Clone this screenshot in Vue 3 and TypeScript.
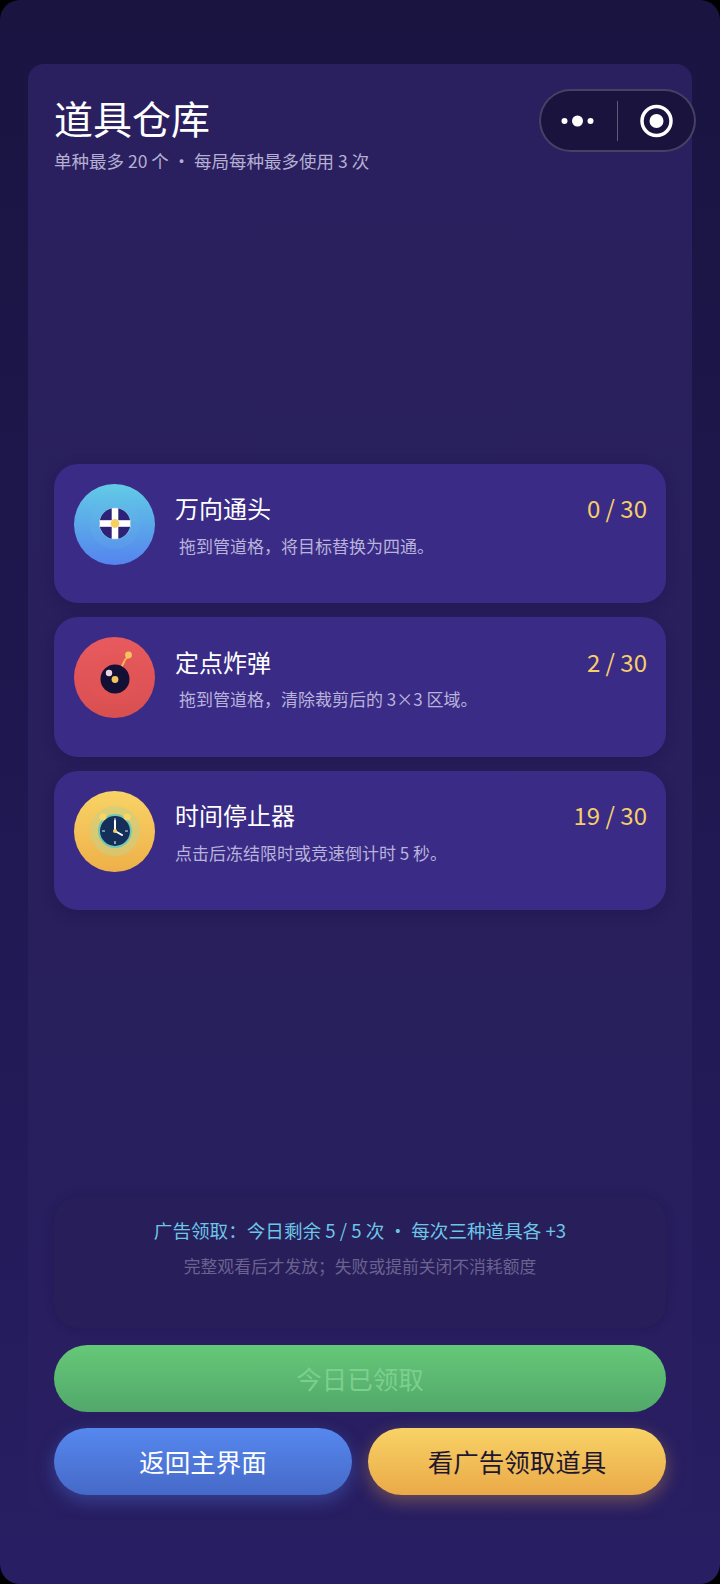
<script setup lang="ts">
interface Item { key: string; name: string; count: string; desc: string; indent: boolean }
const items: Item[] = [
  { key: 'pipe', name: '万向通头', count: '0 / 30', desc: '拖到管道格，将目标替换为四通。', indent: true },
  { key: 'bomb', name: '定点炸弹', count: '2 / 30', desc: '拖到管道格，清除裁剪后的 3×3 区域。', indent: true },
  { key: 'clock', name: '时间停止器', count: '19 / 30', desc: '点击后冻结限时或竞速倒计时 5 秒。', indent: false },
]
</script>

<template>
  <div class="screen">
    <div class="panel">
      <header class="head">
        <h1 class="title">道具仓库</h1>
        <p class="sub">单种最多 20 个 ・ 每局每种最多使用 3 次</p>
      </header>

      <main class="list">
        <section v-for="it in items" :key="it.key" class="card">
          <div class="icon" :class="'icon-' + it.key">
            <svg v-if="it.key === 'pipe'" viewBox="0 0 80 80" width="80" height="80">
              <circle cx="40" cy="40" r="25" fill="#6cc9e6" opacity=".12" />
              <circle cx="40" cy="39.5" r="16" fill="#7fd0ea" />
              <circle cx="40" cy="39.5" r="15.4" fill="#2f2176" />
              <rect x="24.6" y="36.2" width="30.8" height="6.6" fill="#fff" />
              <rect x="36.7" y="24.1" width="6.6" height="30.8" fill="#fff" />
              <circle cx="40" cy="39.5" r="4.4" fill="#f6cf63" />
            </svg>
            <svg v-else-if="it.key === 'bomb'" viewBox="0 0 80 80" width="80" height="80">
              <circle cx="40" cy="41" r="25" fill="#e35656" opacity=".3" />
              <path d="M46 30 L49 24 Q50 21 53 19" fill="none" stroke="#f4b45a" stroke-width="2" stroke-linecap="round" />
              <circle cx="53.5" cy="17" r="3.4" fill="#f6c45e" />
              <circle cx="40" cy="41" r="14.5" fill="#141035" />
              <circle cx="34" cy="35" r="3.2" fill="#ecd3e0" />
              <circle cx="40" cy="41.5" r="3.4" fill="#f3c45c" />
            </svg>
            <svg v-else viewBox="0 0 80 80" width="80" height="80">
              <circle cx="40" cy="40" r="25" fill="#c6cf86" opacity=".55" />
              <circle cx="40" cy="40" r="17" fill="#6fc9b8" />
              <circle cx="28" cy="26" r="3.6" fill="#f6d766" />
              <circle cx="52" cy="26" r="3.6" fill="#f6d766" />
              <circle cx="40" cy="40" r="15" fill="#14305a" />
              <path d="M40 27.5v2M40 50.5v2M27.5 40h2M50.5 40h2" stroke="#e8f0ee" stroke-width="1.2" stroke-linecap="round" />
              <path d="M40 40V30M40 40l7 4" fill="none" stroke="#fff" stroke-width="2" stroke-linecap="round" />
              <circle cx="40" cy="40" r="2" fill="#f6cf63" />
            </svg>
          </div>
          <div class="body">
            <div class="row">
              <span class="name">{{ it.name }}</span>
              <span class="count">{{ it.count }}</span>
            </div>
            <p class="desc" :class="{ indent: it.indent }">{{ it.desc }}</p>
          </div>
        </section>
      </main>

      <section class="ad">
        <p class="ad-main">广告领取：今日剩余 5 / 5 次 ・ 每次三种道具各 +3</p>
        <p class="ad-note">完整观看后才发放；失败或提前关闭不消耗额度</p>
      </section>

      <button class="btn btn-green" type="button">今日已领取</button>
      <div class="btn-row">
        <button class="btn btn-blue" type="button">返回主界面</button>
        <button class="btn btn-yellow" type="button">看广告领取道具</button>
      </div>
    </div>

    <div class="capsule">
      <svg viewBox="0 0 157 63" width="157" height="63">
        <circle cx="25.5" cy="32" r="3" fill="#fff" />
        <circle cx="38.5" cy="32" r="5.5" fill="#fff" />
        <circle cx="51.5" cy="32" r="3" fill="#fff" />
        <rect x="78" y="12" width="1" height="40" fill="#ffffff" opacity=".3" />
        <circle cx="117.5" cy="32" r="14.5" fill="none" stroke="#fff" stroke-width="3.5" />
        <circle cx="117.5" cy="32" r="7" fill="#fff" />
      </svg>
    </div>
  </div>
</template>

<style>
html, body { margin: 0; background: #000; }
</style>

<style scoped>
.screen {
  position: relative;
  box-sizing: border-box;
  width: 720px;
  height: 1584px;
  padding: 64px 28px 72px;
  border-radius: 20px;
  background: linear-gradient(180deg, #1a1441 0%, #1f1851 50%, #281e63 100%);
  font-family: "Noto Sans CJK SC", "Noto Sans", sans-serif;
  overflow: hidden;
}
.panel {
  box-sizing: border-box;
  height: 100%;
  display: flex;
  flex-direction: column;
  padding: 29px 26px 17px;
  border-radius: 16px;
  background: linear-gradient(180deg, #2a205f 0%, #281f5c 60%, #281e62 100%);
}
.head { height: 83px; }
.title {
  margin: 0;
  font-size: 39px;
  line-height: 48px;
  font-weight: 400;
  color: #fff;
}
.sub {
  margin: 7px 0 0;
  font-size: 17.5px;
  line-height: 26px;
  color: #b4afd3;
}
.list {
  flex: 1;
  display: flex;
  flex-direction: column;
  justify-content: center;
  gap: 14px;
  padding-top: 1px;
}
.card {
  box-sizing: border-box;
  height: 139.5px;
  display: flex;
  gap: 20px;
  padding: 20px;
  border-radius: 24px;
  background: #3a2b86;
  box-shadow: 0 4px 14px rgba(20, 14, 60, .3);
}
.icon {
  flex: none;
  width: 81px;
  height: 81px;
  border-radius: 50%;
  display: flex;
  align-items: center;
  justify-content: center;
}
.icon svg { display: block; }
.icon-pipe { background: linear-gradient(180deg, #62cbe6 0%, #5484ee 100%); }
.icon-bomb { background: linear-gradient(180deg, #e85a5e 0%, #d94f50 100%); }
.icon-clock { background: linear-gradient(180deg, #f8d366 0%, #eeb049 100%); }
.body { flex: 1; min-width: 0; margin-right: -1px; }
.row {
  display: flex;
  justify-content: space-between;
  align-items: center;
  height: 48px;
}
.name { font-size: 24px; color: #fff; }
.count { font-size: 24px; color: #f6cf6a; }
.desc {
  margin: 1px 0 0;
  font-size: 17px;
  line-height: 26px;
  color: #b8b3da;
}
.indent { padding-left: 4px; }
.ad {
  box-sizing: border-box;
  height: 131px;
  padding: 19px 16px;
  border-radius: 24px;
  background: #271e5a;
  box-shadow: 0 0 8px rgba(25, 18, 70, .35);
  text-align: center;
}
.ad-main {
  margin: 0;
  font-size: 18.6px;
  line-height: 28px;
  color: #6cc6e6;
}
.ad-note {
  margin: 9px 0 0;
  font-size: 16.8px;
  line-height: 26px;
  color: #6b628f;
}
.btn {
  border: 0;
  padding: 0 0 3px;
  height: 67px;
  border-radius: 34px;
  font-family: inherit;
  font-size: 25.5px;
}
.btn-green {
  margin-top: 17px;
  width: 100%;
  flex: none;
  color: #7dcf90;
  background: linear-gradient(180deg, #65c878 0%, #52a86a 100%);
}
.btn-row {
  margin-top: 16px;
  flex: none;
  display: flex;
  gap: 16px;
}
.btn-row .btn { flex: 1; }
.btn-blue {
  color: #fff;
  background: linear-gradient(180deg, #5688ee 0%, #4669c8 100%);
  box-shadow: 0 6px 18px rgba(84, 132, 238, .35);
}
.btn-yellow {
  color: #1f1730;
  background: linear-gradient(180deg, #f8d366 0%, #eaa948 100%);
  box-shadow: 0 6px 18px rgba(240, 170, 70, .35);
}
.capsule {
  position: absolute;
  top: 89px;
  left: 539px;
  width: 157px;
  height: 63px;
  box-sizing: border-box;
  border-radius: 32px;
  background: #19133d;
  box-shadow: inset 0 0 0 2px rgba(255, 255, 255, .2);
}
.capsule svg { display: block; }
</style>
